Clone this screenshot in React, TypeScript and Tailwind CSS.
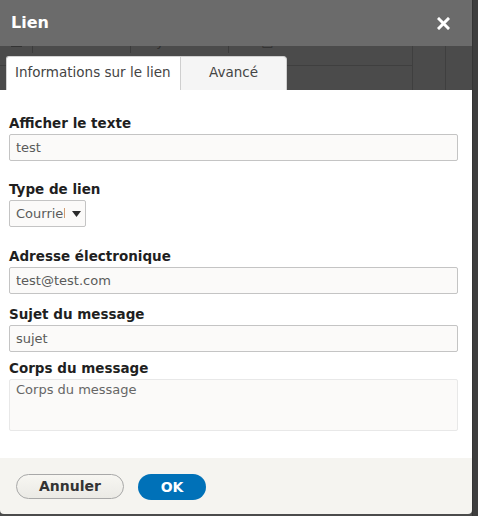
import React from "react";

// Champ de formulaire : libellé + zone de saisie
const Champ = ({ label, valeur, className = "" }: { label: string; valeur: string; className?: string }) => (
  <div className={className}>
    <label className="block h-[19px] text-[13.5px] leading-[16px] font-bold text-[#1f1f1f]">{label}</label>
    <input
      type="text"
      readOnly
      value={valeur}
      className="block w-[449px] h-[27px] px-[6px] bg-[#fbfaf9] border border-[#c4c4c4] rounded-[2px] text-[13px] text-[#5a5a5a] outline-none"
    />
  </div>
);

const App = () => {
  return (
    <div className="relative w-[478px] h-[516px] overflow-hidden bg-[#4b4b4b] font-['DejaVu_Sans',sans-serif]">
      {/* Page en arrière-plan (barre d'outils de l'éditeur) */}
      <div className="flex h-[36px] mt-[30px] border-b border-[#3f3f3f] w-[412px] text-[13px] text-[#2f2f2f]">
        <div className="w-[32px] flex items-end justify-center pb-[18px]">
          <div className="w-[11px] h-[4px] border-t border-b border-[#333]" />
        </div>
        <div className="w-[98px] border-l border-[#3c3c3c] h-[23px] pl-[14px] pt-[2px]">Titre 1</div>
        <div className="w-[98px] border-l border-[#3c3c3c] h-[23px] pl-[12px] pt-[2px]">Styles</div>
        <div className="border-l border-[#3c3c3c] h-[23px] pl-[8px] pt-[2px] flex gap-[12px]">
          <span>▭</span>
          <span>▣ Source</span>
        </div>
      </div>
      <div className="absolute left-[412px] top-[46px] w-[34px] h-[44px] border-l border-r border-[#3f3f3f]" />
      <div className="absolute right-0 top-0 w-[6px] h-full bg-[#3e3e3e] border-l border-[#353535]" />

      {/* Boîte de dialogue */}
      <div className="absolute left-0 top-0 w-[472px] h-[514px] flex flex-col rounded-b-[4px] overflow-hidden">
        <div className="h-[46px] shrink-0 bg-[#6b6b6b] flex items-center justify-between pl-[11px] pr-[22px]">
          <h1 className="text-[16px] font-bold text-white">Lien</h1>
          <svg width="13" height="13" viewBox="0 0 13 13" aria-label="Fermer">
            <path d="M2 2 L11 11 M11 2 L2 11" stroke="white" strokeWidth="3" strokeLinecap="square" />
          </svg>
        </div>

        {/* Onglets */}
        <div className="h-[44px] shrink-0 flex items-end pl-[6px]">
          <div className="h-[34px] w-[174px] bg-white rounded-tl-[3px] border-t border-l border-[#d4d4d4] pl-[8px] pt-[5px] text-[13.5px] text-[#444]">
            Informations sur le lien
          </div>
          <div className="h-[34px] w-[107px] bg-[#f5f5f5] rounded-tr-[4px] border border-b-0 border-[#cfcfcf] text-center pt-[5px] text-[13.5px] text-[#444]">
            Avancé
          </div>
        </div>

        {/* Contenu */}
        <div className="flex-1 bg-white pl-[9px] pt-[25px]">
          <Champ label="Afficher le texte" valeur="test" />

          <div className="mt-[20px]">
            <label className="block h-[19px] text-[13.5px] leading-[16px] font-bold text-[#1f1f1f]">Type de lien</label>
            <div className="w-[77px] h-[27px] bg-[#fbfaf9] border border-[#c4c4c4] rounded-[2px] flex items-center pl-[6px] text-[13px] text-[#5a5a5a]">
              <span className="w-[49px] overflow-hidden whitespace-nowrap">Courriel</span>
              <svg width="9" height="6" viewBox="0 0 9 6" className="ml-[7px]">
                <path d="M0 0 H9 L4.5 6 Z" fill="#2a2a2a" />
              </svg>
            </div>
          </div>

          <Champ label="Adresse électronique" valeur="test@test.com" className="mt-[21px]" />
          <Champ label="Sujet du message" valeur="sujet" className="mt-[12px]" />

          <div className="mt-[8px]">
            <label className="block h-[19px] text-[13.5px] leading-[16px] font-bold text-[#1f1f1f]">Corps du message</label>
            <textarea
              readOnly
              placeholder="Corps du message"
              className="block w-[449px] h-[52px] px-[6px] py-0 bg-[#fbfaf9] border border-[#e8e8e8] rounded-[2px] text-[13px] text-[#5a5a5a] placeholder:text-[#666] resize-none outline-none"
            />
          </div>
        </div>

        {/* Pied */}
        <div className="h-[56px] shrink-0 bg-[#f5f4f0] flex items-start gap-[14px] pl-[16px] pt-[16px]">
          <button className="w-[108px] h-[25px] rounded-full border border-[#a8a8a8] bg-gradient-to-b from-[#f7f6f2] to-[#ebeae5] text-[14px] font-bold text-[#333]">
            Annuler
          </button>
          <button className="w-[68px] h-[26px] rounded-full bg-[#0071b8] text-[14px] font-bold text-white">
            OK
          </button>
        </div>
      </div>
    </div>
  );
};

export default App;
